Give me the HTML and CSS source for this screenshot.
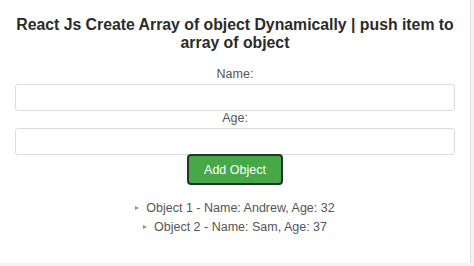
FILE: index.html
```html
<!DOCTYPE html>
<html>
<head>
    <title>React Js Create Array of object Dynamically</title>
    <link rel="stylesheet" href="styles.css">
</head>
<body>
    <div class="card">
        <h1>React Js Create Array of object Dynamically | push item to array of object</h1>

        <form class="form" onsubmit="return false;">
            <label class="label" for="name">Name:</label>
            <input class="input" id="name" type="text">

            <label class="label" for="age">Age:</label>
            <input class="input" id="age" type="text">

            <button class="btn" type="button">Add Object</button>
        </form>

        <ul class="list">
            <li>Object 1 - Name: Andrew, Age: 32</li>
            <li>Object 2 - Name: Sam, Age: 37</li>
        </ul>
    </div>
</body>
</html>
```

FILE: styles.css
```css
body {
    margin: 0;
    background: #f3f3f3;
    font-family: "Liberation Sans", Arial, sans-serif;
}

.card {
    box-sizing: border-box;
    width: 471px;
    height: 263px;
    padding: 16px 15px 0 15px;
    background: white;
    border-right: 1px solid #e2e2e2;
    text-align: center;
}

h1 {
    margin: 0 0 16px 0;
    font-size: 15.8px;
    line-height: 17.5px;
    font-weight: bold;
    color: #2b2b2b;
}

.form {
    display: flex;
    flex-direction: column;
    align-items: center;
}

.label {
    display: block;
    font-size: 12.5px;
    line-height: 14px;
    margin-bottom: 3px;
    color: #555;
}

.input {
    box-sizing: border-box;
    width: 100%;
    height: 27px;
    margin: 0;
    border: 1px solid #dcdcdc;
    border-radius: 3px;
    background: white;
}

.btn {
    box-sizing: border-box;
    width: 96px;
    height: 31px;
    padding: 0;
    margin-top: -1px;
    border: 2px solid #24362a;
    border-radius: 4px;
    background: #47a84a;
    color: white;
    font-family: "Liberation Sans", Arial, sans-serif;
    font-size: 12.5px;
    cursor: pointer;
}

.list {
    list-style: none;
    margin: 14px 0 0 0;
    padding: 0;
    font-size: 12.5px;
    line-height: 18.5px;
    color: #555;
}

.list li::before {
    content: "";
    display: inline-block;
    width: 0;
    height: 0;
    border-top: 2.5px solid transparent;
    border-bottom: 2.5px solid transparent;
    border-left: 4px solid #7f9c82;
    margin-right: 7px;
    vertical-align: 2px;
}
```
